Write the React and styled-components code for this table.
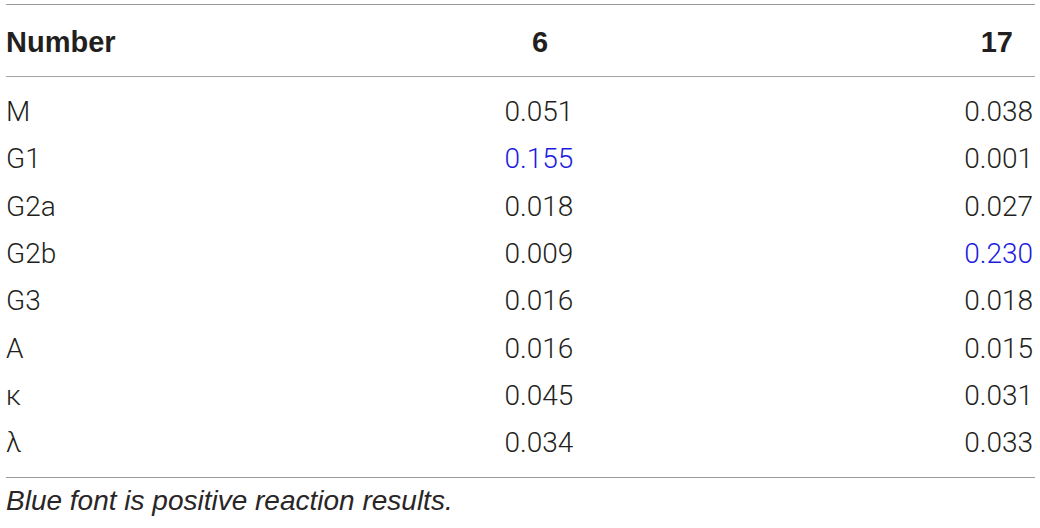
import React from "react";
import styled, { createGlobalStyle } from "styled-components";

const rows = [
    { name: "M", a: "0.051", b: "0.038" },
    { name: "G1", a: "0.155", b: "0.001", blueA: true },
    { name: "G2a", a: "0.018", b: "0.027" },
    { name: "G2b", a: "0.009", b: "0.230", blueB: true },
    { name: "G3", a: "0.016", b: "0.018" },
    { name: "A", a: "0.016", b: "0.015" },
    { name: "κ", a: "0.045", b: "0.031" },
    { name: "λ", a: "0.034", b: "0.033" },
];

const App = () => {
    return (
        <>
            <GlobalStyle />
            <Wrap>
                <Table>
                    <HeadRow>
                        <HeadCell>Number</HeadCell>
                        <HeadCell align="center">6</HeadCell>
                        <HeadCell align="right" pad={22}>17</HeadCell>
                    </HeadRow>
                    <Body>
                        {rows.map((r) => (
                            <Row key={r.name}>
                                <Cell>{r.name}</Cell>
                                <Cell align="center" blue={r.blueA}>{r.a}</Cell>
                                <Cell align="right" blue={r.blueB}>{r.b}</Cell>
                            </Row>
                        ))}
                    </Body>
                </Table>
                <Caption>Blue font is positive reaction results.</Caption>
            </Wrap>
        </>
    );
};

export default App;

const GlobalStyle = createGlobalStyle`
    html,
    body {
        margin: 0;
        padding: 0;
        background: #fff;
    }
`;

const Wrap = styled.div`
    width: 1029px;
    padding: 4px 0 0 6px;
    color: #231f20;
`;

const Table = styled.div`
    border-top: 1.5px solid #9a9a9a;
    border-bottom: 1.5px solid #9a9a9a;
`;

const HeadRow = styled.div`
    display: grid;
    grid-template-columns: 414px 240px 1fr;
    align-items: center;
    height: 71px;
    border-bottom: 1.5px solid #a4a4a4;
    font-family: "Liberation Sans", Arial, sans-serif;
    font-weight: 700;
    font-size: 29px;
`;

const HeadCell = styled.div`
    text-align: ${(p) => p.align || "left"};
    padding-right: ${(p) => (p.pad ? `${p.pad}px` : 0)};
    padding-top: 4px;
`;

const Body = styled.div`
    padding: 11px 0 11px;
`;

const Row = styled.div`
    display: grid;
    grid-template-columns: 414px 240px 1fr;
    align-items: center;
    height: 47.3px;
    font-family: Roboto, "Liberation Sans", sans-serif;
    font-weight: 300;
    font-size: 28px;
`;

const Cell = styled.div`
    text-align: ${(p) => p.align || "left"};
    color: ${(p) => (p.blue ? "#1c1ce0" : "#231f20")};
    padding-right: 2px;
`;

const Caption = styled.div`
    margin-top: 7px;
    font-family: "Liberation Sans", Arial, sans-serif;
    font-style: italic;
    font-size: 28px;
    color: #2a2627;
`;
